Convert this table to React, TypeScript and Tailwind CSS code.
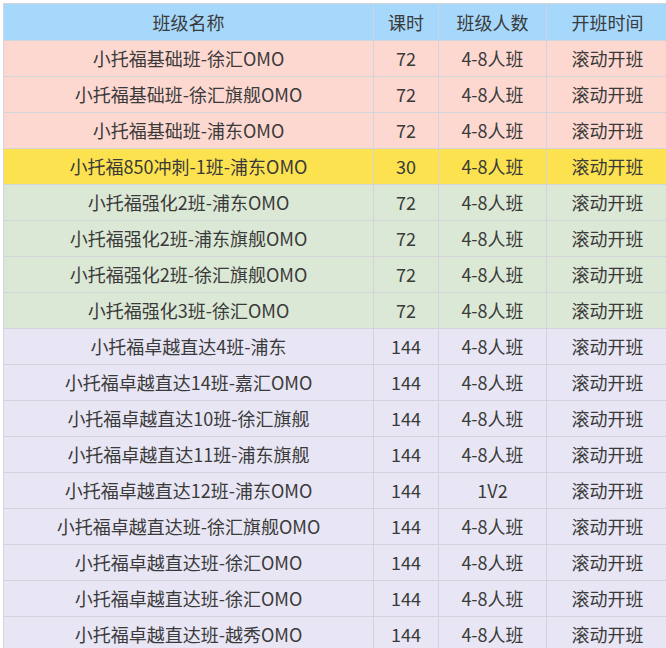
import React from 'react';

type Row = { name: string; hours: string; size: string; bg: string };

const PINK = 'bg-[#fdd8d1]';
const YELLOW = 'bg-[#fce24f]';
const GREEN = 'bg-[#dbe8d5]';
const LAVENDER = 'bg-[#e8e6f4]';

const rows: Row[] = [
  { name: '小托福基础班-徐汇OMO', hours: '72', size: '4-8人班', bg: PINK },
  { name: '小托福基础班-徐汇旗舰OMO', hours: '72', size: '4-8人班', bg: PINK },
  { name: '小托福基础班-浦东OMO', hours: '72', size: '4-8人班', bg: PINK },
  { name: '小托福850冲刺-1班-浦东OMO', hours: '30', size: '4-8人班', bg: YELLOW },
  { name: '小托福强化2班-浦东OMO', hours: '72', size: '4-8人班', bg: GREEN },
  { name: '小托福强化2班-浦东旗舰OMO', hours: '72', size: '4-8人班', bg: GREEN },
  { name: '小托福强化2班-徐汇旗舰OMO', hours: '72', size: '4-8人班', bg: GREEN },
  { name: '小托福强化3班-徐汇OMO', hours: '72', size: '4-8人班', bg: GREEN },
  { name: '小托福卓越直达4班-浦东', hours: '144', size: '4-8人班', bg: LAVENDER },
  { name: '小托福卓越直达14班-嘉汇OMO', hours: '144', size: '4-8人班', bg: LAVENDER },
  { name: '小托福卓越直达10班-徐汇旗舰', hours: '144', size: '4-8人班', bg: LAVENDER },
  { name: '小托福卓越直达11班-浦东旗舰', hours: '144', size: '4-8人班', bg: LAVENDER },
  { name: '小托福卓越直达12班-浦东OMO', hours: '144', size: '1V2', bg: LAVENDER },
  { name: '小托福卓越直达班-徐汇旗舰OMO', hours: '144', size: '4-8人班', bg: LAVENDER },
  { name: '小托福卓越直达班-徐汇OMO', hours: '144', size: '4-8人班', bg: LAVENDER },
  { name: '小托福卓越直达班-徐汇OMO', hours: '144', size: '4-8人班', bg: LAVENDER },
  { name: '小托福卓越直达班-越秀OMO', hours: '144', size: '4-8人班', bg: LAVENDER },
];

const cell = 'border border-[#d3d3dc] text-center align-middle p-0';

export default function App() {
  return (
    <div
      className="h-[648px] w-[666px] overflow-hidden bg-white pl-[3px] pt-[3px] text-[18px] text-[#3a3a3a]"
      style={{ fontFamily: '"Noto Sans CJK SC", "Noto Sans", sans-serif' }}
    >
      <table className="w-[665px] table-fixed border-collapse">
        <colgroup>
          <col className="w-[370px]" />
          <col className="w-[65px]" />
          <col className="w-[108px]" />
          <col className="w-[122px]" />
        </colgroup>
        <thead>
          <tr className="h-[37px] bg-[#a6d8fb]">
            <th className={`${cell} font-normal`}>班级名称</th>
            <th className={`${cell} font-normal`}>课时</th>
            <th className={`${cell} font-normal`}>班级人数</th>
            <th className={`${cell} font-normal`}>开班时间</th>
          </tr>
        </thead>
        <tbody>
          {rows.map((row, i) => (
            <tr key={i} className={`h-[36px] ${row.bg}`}>
              <td className={cell}>{row.name}</td>
              <td className={cell}>{row.hours}</td>
              <td className={cell}>{row.size}</td>
              <td className={cell}>滚动开班</td>
            </tr>
          ))}
        </tbody>
      </table>
    </div>
  );
}
